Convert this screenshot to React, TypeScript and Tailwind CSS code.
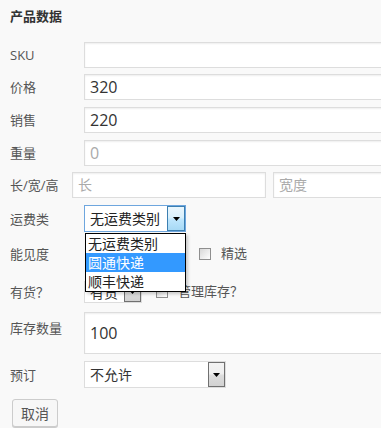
import React from "react";

function Arrow() {
  return (
    <svg width="7" height="4" viewBox="0 0 7 4">
      <polygon points="0,0 7,0 3.5,4" fill="#000" />
    </svg>
  );
}

function Label({ text, className = "w-[74px]" }: { text: string; className?: string }) {
  return <div className={`shrink-0 text-[13px] leading-[16px] text-[#555] ${className}`}>{text}</div>;
}

function TextInput({ value, placeholder, className = "" }: { value?: string; placeholder?: string; className?: string }) {
  return (
    <div
      className={`flex items-center bg-white border border-[#dddddd] shadow-[inset_0_1px_2px_rgba(0,0,0,0.07)] pl-[5px] leading-[20px] ${className}`}
    >
      {value ? <span className="text-[#333]">{value}</span> : <span className="text-[#aaa]">{placeholder}</span>}
    </div>
  );
}

function Checkbox() {
  return (
    <div className="w-[12px] h-[12px] border border-[#8f8f8f] bg-[linear-gradient(135deg,#d8d8d8,#ffffff)] shrink-0" />
  );
}

function GrayButton() {
  return (
    <div className="w-[17px] self-stretch flex justify-center items-center border border-[#707070] bg-[linear-gradient(to_bottom,#f3f3f3_0%,#efefef_45%,#dcdcdc_55%,#d2d2d2_100%)]">
      <Arrow />
    </div>
  );
}

export default function App() {
  return (
    <div className="relative w-[381px] h-[428px] overflow-hidden bg-[#f9f9f9] pl-[10px] font-['Open_Sans','Noto_Sans_CJK_SC',sans-serif]">
      <div className="mt-[8px] text-[13px] leading-[16px] font-bold text-[#333]">产品数据</div>

      <div className="flex items-center h-[26px] mt-[18px]">
        <Label text="SKU" />
        <TextInput className="w-[320px] h-[26px] shrink-0 text-[16px]" value="" placeholder="" />
      </div>

      <div className="flex items-center h-[26px] mt-[6px]">
        <Label text="价格" />
        <TextInput className="w-[320px] h-[26px] shrink-0 text-[16px]" value="320" />
      </div>

      <div className="flex items-center h-[26px] mt-[7px]">
        <Label text="销售" />
        <TextInput className="w-[320px] h-[26px] shrink-0 text-[16px]" value="220" />
      </div>

      <div className="flex items-center h-[26px] mt-[7px]">
        <Label text="重量" />
        <TextInput className="w-[320px] h-[26px] shrink-0 text-[16px]" placeholder="0" />
      </div>

      <div className="flex items-center h-[26px] mt-[6px]">
        <Label text="长/宽/高" className="w-[62px]" />
        <TextInput className="w-[194px] h-[26px] shrink-0 text-[14px]" placeholder="长" />
        <TextInput className="w-[150px] h-[26px] shrink-0 ml-[7px] text-[14px]" placeholder="宽度" />
      </div>

      <div className="flex items-center h-[27px] mt-[7px]">
        <Label text="运费类" />
        <div className="flex w-[102px] h-[27px] shrink-0 bg-white border border-[#6ea6de]">
          <div className="flex-1 flex items-center pl-[5px] text-[14px] text-[#222]">无运费类别</div>
          <div className="w-[18px] flex justify-center items-center border border-[#3c7fb1] bg-[linear-gradient(to_bottom,#eaf6fd_0%,#d9f0fc_45%,#bee6fd_55%,#a7d9f5_100%)]">
            <Arrow />
          </div>
        </div>
      </div>

      <div className="flex items-center h-[26px] mt-[9px]">
        <Label text="能见度" />
        <div className="w-[115px] shrink-0" />
        <Checkbox />
        <span className="ml-[10px] text-[13px] text-[#555]">精选</span>
      </div>

      <div className="flex items-center h-[22px] mt-[14px]">
        <Label text="有货？" />
        <div className="flex w-[58px] h-[22px] shrink-0 bg-white border border-[#dddddd]">
          <div className="flex-1 flex items-center pl-[5px] text-[14px] text-[#333]">有货</div>
          <GrayButton />
        </div>
        <div className="ml-[14px]">
          <Checkbox />
        </div>
        <span className="ml-[10px] text-[13px] text-[#555]">管理库存？</span>
      </div>

      <div className="flex items-start h-[42px] mt-[9px]">
        <Label text="库存数量" className="w-[74px] pt-[8px]" />
        <TextInput className="w-[320px] h-[42px] shrink-0 text-[16px]" value="100" />
      </div>

      <div className="flex items-center h-[27px] mt-[7px]">
        <Label text="预订" />
        <div className="flex w-[142px] h-[27px] shrink-0 bg-white border border-[#dddddd]">
          <div className="flex-1 flex items-center pl-[5px] text-[14px] text-[#333]">不允许</div>
          <GrayButton />
        </div>
      </div>

      <div className="mt-[11px] ml-[2px] w-[46px] h-[28px] flex items-center justify-center border border-[#cccccc] rounded-[3px] bg-[#f7f7f7] shadow-[0_1px_0_#ccc] text-[14px] text-[#555]">
        取消
      </div>

      <div className="absolute left-[85px] top-[233px] w-[101px] border border-black bg-white shadow-[2px_2px_3px_rgba(0,0,0,0.2)] text-[14px] leading-[19px] text-[#222]">
        <div className="pl-[2px]">无运费类别</div>
        <div className="pl-[2px] bg-[#3399ff] text-white">圆通快递</div>
        <div className="pl-[2px]">顺丰快递</div>
      </div>
    </div>
  );
}
